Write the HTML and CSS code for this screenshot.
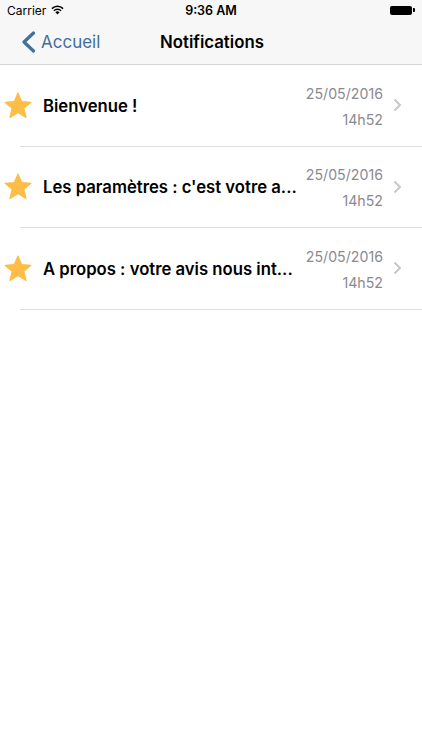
FILE: index.html
```html
<!DOCTYPE html>
<html lang="fr">
<head>
    <meta charset="UTF-8">
    <meta name="viewport" content="width=device-width, initial-scale=1.0">
    <title>Notifications</title>
    <link rel="stylesheet" href="styles.css">
</head>
<body>

    <!-- Status bar -->
    <div class="status-bar">
        <div class="carrier">
            Carrier
            <svg class="wifi" width="13" height="10" viewBox="0 0 13 10">
                <path d="M6.5 9.6 L4.4 7.3 A3 3 0 0 1 8.6 7.3 Z" fill="#000"/>
                <path d="M2.9 5.8 A5.1 5.1 0 0 1 10.1 5.8" stroke="#000" stroke-width="1.5" fill="none"/>
                <path d="M0.9 3.6 A8 8 0 0 1 12.1 3.6" stroke="#000" stroke-width="1.5" fill="none"/>
            </svg>
        </div>
        <div class="time">9:36 AM</div>
        <div class="battery">
            <span class="battery-body"></span><span class="battery-nub"></span>
        </div>
    </div>

    <!-- Navigation bar -->
    <div class="nav-bar">
        <div class="back">
            <svg width="15" height="22" viewBox="0 0 15 22">
                <path d="M12.5 2 L3 11 L12.5 20" stroke="#41709a" stroke-width="3.2" fill="none" stroke-linecap="round" stroke-linejoin="round"/>
            </svg>
            <span>Accueil</span>
        </div>
        <h1>Notifications</h1>
    </div>

    <!-- Notification list -->
    <div class="notif-list">
        <div class="notif-row">
            <svg class="star" width="28" height="27" viewBox="0 0 28 27">
                <path d="M14 1 L17.6 9.6 L26.9 10.3 L19.8 16.3 L22 25.4 L14 20.5 L6 25.4 L8.2 16.3 L1.1 10.3 L10.4 9.6 Z" fill="#fdbd47" stroke="#fdbd47" stroke-width="1.2" stroke-linejoin="round"/>
            </svg>
            <div class="notif-title">Bienvenue !</div>
            <div class="notif-date">
                <span>25/05/2016</span>
                <span>14h52</span>
            </div>
            <svg class="chevron" width="9" height="14" viewBox="0 0 9 14">
                <path d="M1.5 1.5 L7 7 L1.5 12.5" stroke="#c7c7cc" stroke-width="2" fill="none"/>
            </svg>
        </div>
        <div class="notif-row">
            <svg class="star" width="28" height="27" viewBox="0 0 28 27">
                <path d="M14 1 L17.6 9.6 L26.9 10.3 L19.8 16.3 L22 25.4 L14 20.5 L6 25.4 L8.2 16.3 L1.1 10.3 L10.4 9.6 Z" fill="#fdbd47" stroke="#fdbd47" stroke-width="1.2" stroke-linejoin="round"/>
            </svg>
            <div class="notif-title">Les paramètres : c'est votre a...</div>
            <div class="notif-date">
                <span>25/05/2016</span>
                <span>14h52</span>
            </div>
            <svg class="chevron" width="9" height="14" viewBox="0 0 9 14">
                <path d="M1.5 1.5 L7 7 L1.5 12.5" stroke="#c7c7cc" stroke-width="2" fill="none"/>
            </svg>
        </div>
        <div class="notif-row">
            <svg class="star" width="28" height="27" viewBox="0 0 28 27">
                <path d="M14 1 L17.6 9.6 L26.9 10.3 L19.8 16.3 L22 25.4 L14 20.5 L6 25.4 L8.2 16.3 L1.1 10.3 L10.4 9.6 Z" fill="#fdbd47" stroke="#fdbd47" stroke-width="1.2" stroke-linejoin="round"/>
            </svg>
            <div class="notif-title">A propos : votre avis nous int...</div>
            <div class="notif-date">
                <span>25/05/2016</span>
                <span>14h52</span>
            </div>
            <svg class="chevron" width="9" height="14" viewBox="0 0 9 14">
                <path d="M1.5 1.5 L7 7 L1.5 12.5" stroke="#c7c7cc" stroke-width="2" fill="none"/>
            </svg>
        </div>
    </div>

</body>
</html>
```

FILE: styles.css
```css
/* Basic Reset */
* {
    margin: 0;
    padding: 0;
    box-sizing: border-box;
}

body {
    font-family: Inter, "Liberation Sans", sans-serif;
    background-color: #ffffff;
    color: #000;
    width: 422px;
    height: 750px;
}

/* Status bar */
.status-bar {
    height: 20px;
    background-color: #f7f7f7;
    display: flex;
    align-items: center;
    justify-content: space-between;
    padding: 0 7px;
    font-size: 12px;
}

.carrier {
    display: flex;
    align-items: center;
    gap: 5px;
    width: 120px;
}

.time {
    font-weight: 600;
    font-size: 12.5px;
}

.battery {
    width: 120px;
    display: flex;
    justify-content: flex-end;
    align-items: center;
}

.battery-body {
    width: 22px;
    height: 9px;
    background-color: #000;
    border-radius: 2px;
}

.battery-nub {
    width: 2px;
    height: 4px;
    background-color: #000;
    margin-left: 1px;
    border-radius: 0 1px 1px 0;
}

/* Nav bar */
.nav-bar {
    height: 45px;
    background-color: #f7f7f7;
    border-bottom: 1px solid #d6d6d6;
    display: flex;
    align-items: center;
    padding-left: 21px;
}

.nav-bar .back {
    display: flex;
    align-items: center;
    gap: 5px;
    color: #41709a;
    font-size: 17px;
    width: 139px;
}

.nav-bar h1 {
    font-size: 16.8px;
    font-weight: 600;
}

/* Rows */
.notif-row {
    height: 81.5px;
    display: flex;
    align-items: center;
    position: relative;
    padding-left: 4px;
    padding-right: 20px;
}

.notif-row::after {
    content: "";
    position: absolute;
    left: 20px;
    right: 0;
    bottom: 0;
    height: 1px;
    background-color: #e0e0e0;
}

.star {
    margin-top: -1px;
    flex-shrink: 0;
}

.notif-title {
    margin-left: 11px;
    flex: 1;
    font-size: 16.7px;
    font-weight: 600;
    white-space: nowrap;
}

.notif-date {
    display: flex;
    flex-direction: column;
    align-items: flex-end;
    font-size: 14.2px;
    color: #8a8a8f;
    line-height: 26px;
    margin-top: 2px;
}

.chevron {
    margin-left: 10px;
    margin-top: -1px;
}
```
